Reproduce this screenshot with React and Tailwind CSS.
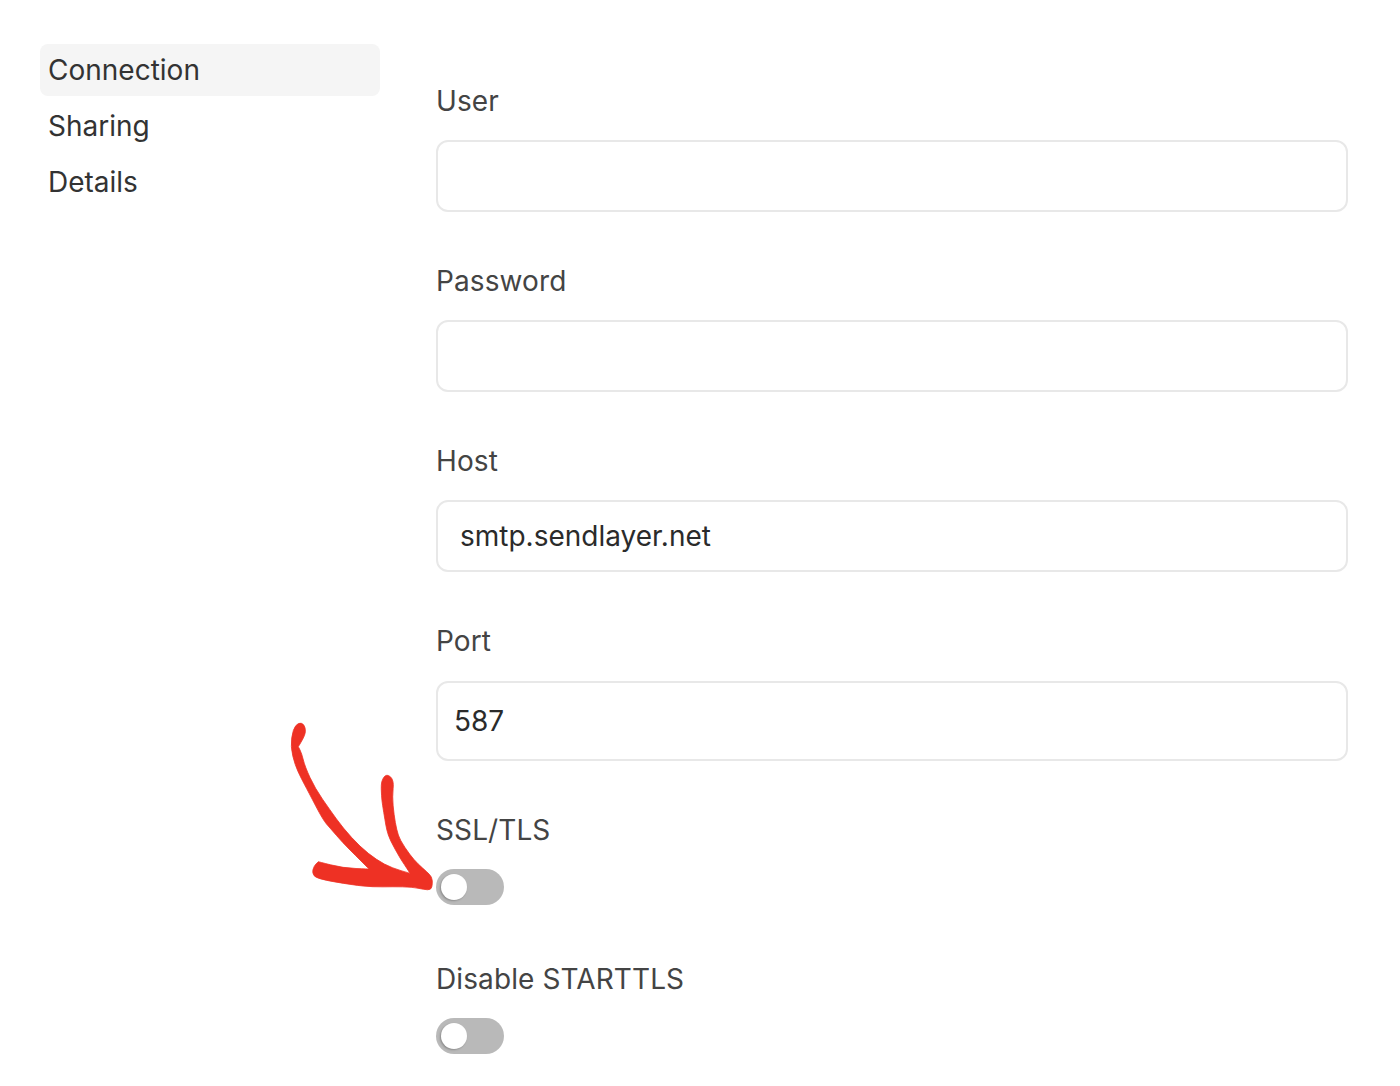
import React from "react";

const ARROW_POINTS = [
  [298.5, 722.5], [304, 724], [306, 731.7], [303, 739], [298.3, 746.7], [298.3, 746.7],
  [301.7, 753.3], [305, 766.7], [315, 788.3], [330, 810], [343, 828], [360, 846.7],
  [376.7, 860], [392, 868], [410, 873.3], [410, 873.3], [410, 873.3], [404, 864], [400, 858],
  [390, 840], [386.7, 830], [385, 820], [382.5, 805], [381.5, 796.7], [381, 781], [386.7, 773.5],
  [394, 780], [392.3, 796.7], [394, 815], [396.7, 830], [400, 840], [410, 855], [418, 864],
  [426.7, 871.7], [432, 877], [432.5, 884], [431, 890], [424, 889.5], [412, 887], [393, 886.7],
  [373, 887], [353, 885], [316.7, 878.8], [312, 873], [314, 866], [318.3, 861.7], [318.3, 861.7],
  [343, 868], [369, 869], [369, 869], [369, 869], [355, 855], [343, 843], [330, 828], [323, 820],
  [308.3, 791.7], [301, 778], [295, 765], [290.5, 746.7], [293, 729],
];

function smoothClosed(points) {
  const mid = (a, b) => [(a[0] + b[0]) / 2, (a[1] + b[1]) / 2];
  const n = points.length;
  const start = mid(points[n - 1], points[0]);
  let d = `M${start[0]} ${start[1]}`;
  points.forEach((p, i) => {
    const m = mid(p, points[(i + 1) % n]);
    d += ` Q${p[0]} ${p[1]} ${m[0]} ${m[1]}`;
  });
  return d + " Z";
}

function Label({ children, className = "" }) {
  return <div className={`h-10 text-[28px] leading-[41px] tracking-[0.1px] text-[#444444] ${className}`}>{children}</div>;
}

function Field({ label, value = "", labelGap = "mb-[19px]", inputClass = "h-[72px] px-[22px]", className = "" }) {
  return (
    <div className={className}>
      <Label className={labelGap}>{label}</Label>
      <input
        readOnly
        value={value}
        className={`block w-full rounded-xl border-2 border-[#e8e8e8] bg-white text-[28px] text-[#2b2b2b] outline-none ${inputClass}`}
      />
    </div>
  );
}

function Toggle() {
  return (
    <div className="flex h-9 w-[68px] items-center rounded-full bg-[#b9b9b9] pl-[5px]">
      <div className="h-[26px] w-[26px] rounded-full bg-white shadow-[-1px_1px_2px_rgba(0,0,0,0.25)]" />
    </div>
  );
}

function Arrow() {
  return (
    <svg className="absolute left-[280px] top-[710px]" width="240" height="200" viewBox="280 710 240 200">
      <path fill="#ee3124" stroke="#ee3124" strokeWidth="0.8" strokeLinejoin="round" d={smoothClosed(ARROW_POINTS)} />
    </svg>
  );
}

export default function App() {
  return (
    <div className="relative flex h-[1086px] w-full overflow-hidden bg-white pl-10 pt-11 font-['Inter',sans-serif]">
      <nav className="flex w-[340px] shrink-0 flex-col gap-1 text-[28px] text-[#333333]">
        <div className="flex h-[52px] items-center rounded-lg bg-[#f5f5f5] px-2">Connection</div>
        <div className="flex h-[52px] items-center px-2">Sharing</div>
        <div className="flex h-[52px] items-center px-2">Details</div>
      </nav>
      <main className="ml-14 w-[912px] pt-[37px]">
        <Field label="User" />
        <Field label="Password" className="mt-[49px]" />
        <Field label="Host" value="smtp.sendlayer.net" className="mt-[49px]" />
        <Field label="Port" value="587" labelGap="mb-5" inputClass="h-20 px-4" className="mt-[49px]" />
        <Label className="mb-[19px] mt-[49px]">SSL/TLS</Label>
        <Toggle />
        <Label className="mb-[19px] mt-[54px]">Disable STARTTLS</Label>
        <Toggle />
      </main>
      <Arrow />
    </div>
  );
}
